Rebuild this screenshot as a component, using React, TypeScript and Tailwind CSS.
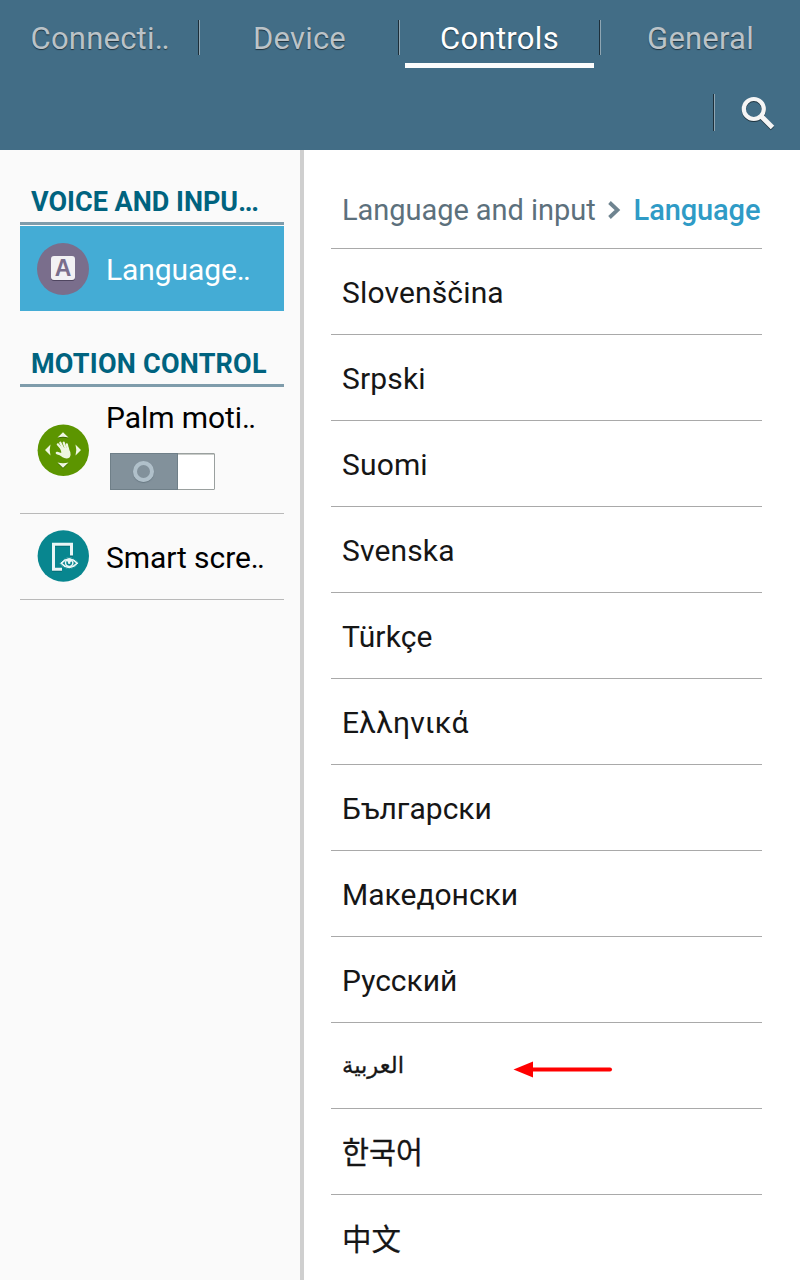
import React from "react";

const tabs = [
  { label: "Connecti", dots: "..", active: false },
  { label: "Device", dots: "", active: false },
  { label: "Controls", dots: "", active: true },
  { label: "General", dots: "", active: false },
];

const latinLanguages = ["Slovenščina", "Srpski", "Suomi", "Svenska", "Türkçe", "Ελληνικά"];

const cyrillicLanguages = ["Български", "Македонски", "Русский"];

const rowClass = "flex h-[86px] shrink-0 items-center border-b border-[#a9a9a9] pl-[11px] pt-[2px] text-[30px] text-[#161616]";

function Divider({ className }: { className: string }) {
  return (
    <span className={`flex w-[2px] shrink-0 ${className}`}>
      <span className="w-px bg-[#1d2f3a]" />
      <span className="w-px bg-[#8fa6b3]" />
    </span>
  );
}

function SearchIcon() {
  return (
    <svg width="36" height="36" viewBox="0 0 36 36" fill="none">
      <g stroke="#1f3440" strokeWidth="4.2" transform="translate(0 1)">
        <circle cx="13.8" cy="13" r="10" />
        <path d="M21 20 32.500 31.500" strokeWidth="5" />
      </g>
      <g stroke="#f5f5f5" strokeWidth="4.2">
        <circle cx="13.8" cy="13" r="10" />
        <path d="M21 20 32.500 31.500" strokeWidth="5" />
      </g>
    </svg>
  );
}

function KeyIcon() {
  return (
    <span className="flex size-[52px] shrink-0 items-center justify-center rounded-full bg-[#7a6e8c]">
      <span className="mt-[-2px] flex size-6 items-center justify-center rounded-[3px] bg-[#f2f1f4] pt-px font-['Liberation_Sans'] text-[23px] leading-none font-bold text-[#7a6e8c] shadow-[0_1px_0_#4f4560]">
        A
      </span>
    </span>
  );
}

function PalmIcon() {
  return (
    <svg className="shrink-0" width="52" height="52" viewBox="0 0 52 52">
      <circle cx="26.3" cy="26.3" r="25.7" fill="#5c9500" />
      <g fill="#3f6c00" transform="translate(0 1)">
        <path d="M20.500 13.500 26 8.200l5.500 5.300q-5.500-1.600-11 0ZM20.500 38.500 26 43.800l5.500-5.300q-5.500 1.600-11 0Z" />
      </g>
      <g fill="#eef6e2">
        <path d="M20.500 13.500 26 8.200l5.500 5.300q-5.500-1.600-11 0ZM20.500 38.500 26 43.800l5.500-5.300q-5.500 1.600-11 0ZM13.500 20.500 8 26l5.500 5.500q-1.600-5.500 0-11ZM38.500 20.500 44 26l-5.500 5.500q1.600-5.500 0-11Z" />
      </g>
      <g stroke="#eef6e2" strokeLinecap="round" fill="none">
        <path d="M26.500 27 20.800 20.300" strokeWidth="2.200" />
        <path d="M27 26 23.300 18.700" strokeWidth="2.200" />
        <path d="M29 25.500 26.700 18.700" strokeWidth="2.200" />
        <path d="M31 26 29.800 20.300" strokeWidth="2.200" />
        <path d="M24.500 30.500 20 29" strokeWidth="2.600" />
      </g>
      <path d="M23.300 24.500 31.800 23.500q.4 2.500 1.500 4.500.8 3-.5 5.200-2.500 1.900-5.500.8-2.800-1-5.500-4l2.600-1.500Z" fill="#eef6e2" />
    </svg>
  );
}

function SmartScreenIcon() {
  return (
    <svg className="mt-[-1px] shrink-0" width="52" height="52" viewBox="0 0 52 52" fill="none">
      <circle cx="26.3" cy="26" r="25.700" fill="#08868f" />
      <path d="M34.500 26.500V15H16.500V40H25" stroke="#04616a" strokeWidth="3" />
      <path d="M34.500 25.500V14.200H16.500V39.200H25" stroke="#e9f6f6" strokeWidth="3" />
      <path d="M22.500 33.200Q32 22 42 33.200 32 44.500 22.500 33.200Z" fill="#e9f6f6" stroke="#08868f" strokeWidth="1" />
      <path d="M25.500 33.200Q32 26.500 39 33.200 32 40 25.500 33.200Z" fill="#08868f" />
      <circle cx="32.200" cy="32.800" r="4.400" fill="#e9f6f6" />
      <path d="M30.200 31.500q-.8 3.400 2.200 3.300 2.500-.4 1.700-3" stroke="#08868f" strokeWidth="1.700" />
    </svg>
  );
}

function Toggle() {
  return (
    <span className="flex h-[37px] w-[105px] rounded-[1px] border border-[#9aa09f] bg-white">
      <span className="-my-px -ml-px flex w-[68px] items-center justify-center border border-[#6f7f88] bg-[#82919b]">
        <span className="mt-[-1px] mr-px size-[21px] rounded-full border-4 border-[#b0c0ca] shadow-[0_1px_1px_#697983]" />
      </span>
      <span className="grow border-t border-[#c9ccc9]" />
    </span>
  );
}

function SectionTitle({ children }: { children: React.ReactNode }) {
  return (
    <h2 className="h-[47px] border-b-[3px] border-[#7f9cab] pl-[11px] text-[27px] leading-[48px] font-bold whitespace-nowrap text-[#00637f]">
      {children}
    </h2>
  );
}

function ItemLabel({ text }: { text: string }) {
  return (
    <span className="tracking-[-0.080px] whitespace-nowrap">
      {text}
      <span className="tracking-[-1.700px]">..</span>
    </span>
  );
}

export default function App() {
  return (
    <div className="flex h-[1280px] w-[800px] flex-col overflow-hidden bg-white font-['Roboto','Noto_Sans_CJK_KR',sans-serif]">
      <header className="flex h-[150px] shrink-0 flex-col bg-[#426d86]">
        <nav className="flex h-[76px]">
          {tabs.map((tab, i) => (
            <div key={tab.label} className="flex w-[200px]">
              <div className="flex grow flex-col pl-[5px]">
                <span
                  className={`h-[63px] pt-[2px] text-center text-[31px] leading-[73px] ${
                    tab.active
                      ? "pr-[5px] tracking-[0.300px] text-white [text-shadow:0_1px_1px_#20343f]"
                      : "pr-1 tracking-[0.200px] text-[#bbc3c8] [text-shadow:0_1px_1px_#20343f]"
                  }`}
                >
                  {tab.label}
                  {tab.dots && <span className="tracking-[-1.300px]">{tab.dots}</span>}
                </span>
                {tab.active && <span className="mr-[5px] h-[5px] bg-[#fcfcfc]" />}
              </div>
              {i < 3 && <Divider className={tab.active ? "-mr-px mt-5 h-[35px]" : "mt-5 h-[35px]"} />}
            </div>
          ))}
        </nav>
        <div className="flex justify-end pt-[18px] pr-6">
          <Divider className="h-[37px]" />
          <span className="pt-[2px] pl-[25px]">
            <SearchIcon />
          </span>
        </div>
      </header>

      <div className="flex min-h-0 grow">
        <aside className="w-[304px] shrink-0 border-r-4 border-[#cfcfcf] bg-[#fafafa] pt-7 pr-4 pl-5 text-[30px] text-black">
          <SectionTitle>
            VOICE AND INPU<span className="tracking-[-1.300px]">...</span>
          </SectionTitle>
          <div className="mt-px flex h-[85px] items-center gap-[17px] bg-[#44acd5] pl-[17px] text-white">
            <KeyIcon />
            <span className="pt-px">
              <ItemLabel text="Language" />
            </span>
          </div>
          <div className="pt-[29px] [&_h2]:tracking-[0.230px]">
            <SectionTitle>MOTION CONTROL</SectionTitle>
          </div>
          <div className="flex h-[127px] items-center gap-[17px] border-b border-[#b9b9b9] pl-[17px]">
            <PalmIcon />
            <div className="flex h-full flex-col pt-[13px] leading-9">
              <ItemLabel text="Palm moti" />
              <span className="mt-[17px] ml-1 flex">
                <Toggle />
              </span>
            </div>
          </div>
          <div className="flex h-[86px] items-center gap-[17px] border-b border-[#b9b9b9] pl-[17px]">
            <SmartScreenIcon />
            <span className="pt-px">
              <ItemLabel text="Smart scre" />
            </span>
          </div>
        </aside>

        <main className="flex grow flex-col pr-[38px] pl-[27px]">
          <div className="flex h-[99px] shrink-0 items-center border-b border-[#a9a9a9] pt-6 pl-[11px] text-[29px] whitespace-nowrap">
            <span className="tracking-[-0.050px] text-[#5c707c]">Language and input</span>
            <svg className="mt-[-2px] mr-3 ml-[11px] shrink-0" width="15" height="18" viewBox="0 0 15 18" fill="none">
              <path d="M2.500 1.500 10.500 9 2.500 16.500" stroke="#6f8490" strokeWidth="3.800" />
            </svg>
            <span className="font-medium tracking-[-0.100px] text-[#2f9bc6]">Language</span>
          </div>
          {latinLanguages.map((name) => (
            <div key={name} className={`${rowClass} tracking-[0.150px]`}>
              {name}
            </div>
          ))}
          {cyrillicLanguages.map((name) => (
            <div key={name} className={rowClass}>
              {name}
            </div>
          ))}
          <div className={`${rowClass} justify-between`}>
            <span className="mt-[-2px] font-['DejaVu_Sans'] text-[22.700px] [-webkit-text-stroke:0.300px_#161616]">العربية</span>
            <svg className="mt-[5px] mr-[149px]" width="100" height="18" viewBox="0 0 100 18">
              <path d="M18 9.500H97" stroke="#f00" strokeWidth="4" strokeLinecap="round" />
              <path d="M.5 9.500 20 1.500V17.500Z" fill="#f00" />
            </svg>
          </div>
          <div className={rowClass}>
            <span className="mt-[2px] text-[29.300px] [-webkit-text-stroke:0.300px_#161616]">한국어</span>
          </div>
          <div className={rowClass}>
            <span className="mt-[-2px] font-['Noto_Sans_CJK_SC',sans-serif] text-[29.500px] [-webkit-text-stroke:0.200px_#161616]">中文</span>
          </div>
        </main>
      </div>
    </div>
  );
}
